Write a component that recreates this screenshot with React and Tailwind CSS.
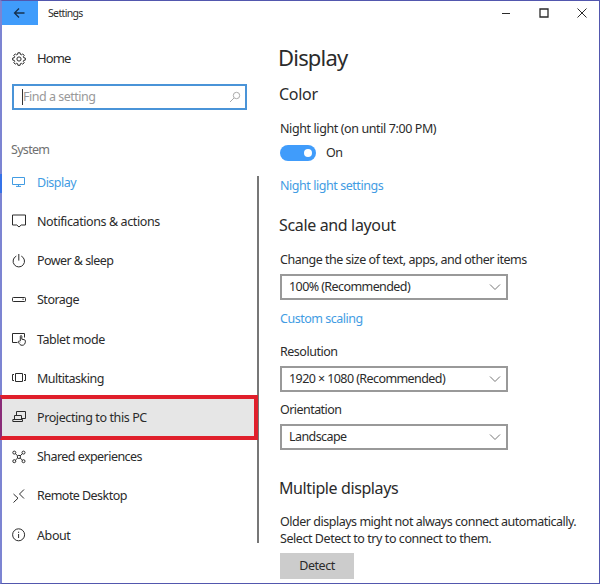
import { useState } from "react";

const Icon = ({ children, className = "w-[14px] h-[14px]", box = "0 0 14 14" }) => (
  <svg
    viewBox={box}
    className={className}
    fill="none"
    stroke="currentColor"
    strokeWidth="1"
  >
    {children}
  </svg>
);

const GearIcon = () => (
  <Icon>
    <path d="M5.9 .8h2.2l.3 1.6 1 .4 1.3-.9 1.5 1.5-.9 1.3.4 1 1.6.3v2.1l-1.6.3-.4 1 .9 1.3-1.5 1.5-1.3-.9-1 .4-.3 1.6H5.9l-.3-1.6-1-.4-1.3.9-1.5-1.5.9-1.3-.4-1L.7 8.1V6l1.6-.3.4-1-.9-1.3 1.5-1.5 1.3.9 1-.4z" />
    <circle cx="7" cy="7" r="2.1" />
  </Icon>
);

const DisplayIcon = () => (
  <Icon>
    <path d="M.5 2.5h12v7H.5zM4 11.4h5M6.5 9.5v2" />
  </Icon>
);

const MessageIcon = () => (
  <Icon>
    <path d="M.5 1h13v10H9.2L7 13l-2.2-2H.5z" />
  </Icon>
);

const PowerIcon = () => (
  <Icon>
    <path d="M4.3 2.1a5.7 5.7 0 1 0 5 0M6.8 0v6.6" />
  </Icon>
);

const StorageIcon = () => (
  <Icon>
    <rect x=".5" y="4.5" width="13" height="4" rx=".8" />
    <path d="M10.4 6.2h1.4" />
  </Icon>
);

const TabletIcon = () => (
  <Icon>
    <path d="M5.5 10.5h-5v-9h12v4" />
    <path d="M8.3 9V4.3c0-1 1.5-1 1.5 0v2.9l2.4.5c.9.2 1.2.6 1.2 1.4 0 2.6-1.1 4.2-3.3 4.2-1.8 0-2.6-1-3.6-3.2-.4-1 .5-1.7 1.8-.2" />
  </Icon>
);

const MultitaskIcon = () => (
  <Icon>
    <path d="M3.5 2.5h7v8h-7zM2 3.5H.5v6H2M12 3.5h1.5v6H12" />
  </Icon>
);

const ProjectIcon = () => (
  <Icon>
    <path d="M4.5 5.5v-4h9v7h-4M2.5 9.500v-4h7v4M.8 9.500h9.700v2H.8z" />
  </Icon>
);

const ShareIcon = () => (
  <Icon>
    <circle cx="2.3" cy="2.6" r="1.5" />
    <circle cx="11.5" cy="2.6" r="1.5" />
    <circle cx="2.3" cy="11.2" r="1.5" />
    <circle cx="11.5" cy="11.2" r="1.5" />
    <circle cx="6.9" cy="6.9" r="1.6" />
    <path d="M3.4 3.7l2.3 2.2M10.4 3.7L8.1 5.9M3.4 10.1l2.3-2.1M10.4 10.1L8.1 8" />
  </Icon>
);

const RemoteIcon = () => (
  <Icon>
    <path d="M1.5 5l4.5 4.2L1.5 13.5M12 .5L7.5 5 12 9.5" />
  </Icon>
);

const InfoIcon = () => (
  <Icon>
    <circle cx="6.6" cy="6.8" r="6" />
    <path d="M6.6 6v4M6.6 3.7v1.2" />
  </Icon>
);

const navItems = [
  { label: "Display", icon: DisplayIcon, tracking: "tracking-[-0.5px]" },
  { label: "Notifications & actions", icon: MessageIcon, tracking: "tracking-[-0.4px]" },
  { label: "Power & sleep", icon: PowerIcon, tracking: "tracking-[-0.55px]" },
  { label: "Storage", icon: StorageIcon, tracking: "tracking-[-0.5px]" },
  { label: "Tablet mode", icon: TabletIcon, tracking: "tracking-[-0.45px]" },
  { label: "Multitasking", icon: MultitaskIcon, tracking: "tracking-[-0.5px]" },
  { label: "Projecting to this PC", icon: ProjectIcon, tracking: "tracking-[-0.4px]" },
  { label: "Shared experiences", icon: ShareIcon, tracking: "tracking-[-0.55px]" },
  { label: "Remote Desktop", icon: RemoteIcon, tracking: "tracking-[-0.55px]" },
  { label: "About", icon: InfoIcon, tracking: "tracking-[-0.4px]" },
];

const Select = ({ value, className }) => (
  <button
    className={`flex w-[228px] h-[26px] items-center justify-between border-2 border-[#999999] pl-[7px] pr-[5px] text-left tracking-[-0.58px] whitespace-nowrap ${className}`}
  >
    <span>{value}</span>
    <Icon className="w-3 h-3 text-[#777777]" box="0 0 12 12">
      <path d="M1 3.5l5 5 5-5" />
    </Icon>
  </button>
);

const App = () => {
  const [active, setActive] = useState("Display");
  const [nightLight, setNightLight] = useState(true);

  return (
    <div className="flex w-[600px] h-[584px] flex-col border border-l-2 border-[#5257ae] border-l-[#7c84d2] bg-white font-['Noto_Sans',sans-serif] text-[12.5px] text-[#2b2b2b]">
      {/* Title bar */}
      <div className="flex h-6 shrink-0 items-center">
        <button className="flex w-9 h-6 items-center justify-center bg-[#409cfb] pr-[3px] text-[#16324f]">
          <Icon className="w-3 h-3" box="0 0 12 12">
            <path d="M11.5 6H1.5M6 1.5L1.5 6 6 10.5" strokeWidth="1.3" />
          </Icon>
        </button>
        <span className="-mt-px ml-[10px] text-[10.5px] leading-4 tracking-[-0.65px]">Settings</span>
        <div className="ml-auto mr-[12px] flex items-center gap-7">
          <Icon className="w-[10px] h-[10px]" box="0 0 10 10">
            <path d="M1 5.5h8" />
          </Icon>
          <Icon className="w-[10px] h-[10px]" box="0 0 10 10">
            <path d="M1 1h8v8H1z" strokeWidth="1.3" />
          </Icon>
          <Icon className="w-[10px] h-[10px]" box="0 0 10 10">
            <path d="M.5 .5l9 9M9.5 .5l-9 9" />
          </Icon>
        </div>
      </div>

      <div className="flex min-h-0 flex-1">
        {/* Sidebar */}
        <div className="w-[256px] shrink-0">
          <div className="mt-[24px] ml-[10px] flex h-5 items-center gap-[11px]">
            <GearIcon />
            <span className="text-[13px] tracking-[-0.9px]">Home</span>
          </div>
          <div className="mt-[15px] ml-[10px] flex w-[235px] h-[26px] items-center border-2 border-[#4a94d8] pl-2 pr-1">
            <span className="h-4 w-px bg-[#333333]" />
            <span className="text-[#999999] tracking-[-0.5px]">Find a setting</span>
            <Icon className="ml-auto w-3 h-3 text-[#aaaaaa]" box="0 0 12 12">
              <circle cx="7.5" cy="4.5" r="3.2" />
              <path d="M5 7L1 11" />
            </Icon>
          </div>
          <div className="mt-[30px] ml-[9px] h-5 leading-5 text-[#707070] tracking-[-0.7px]">
            System
          </div>
          <div className="mt-[3.6px] flex flex-col">
            {navItems.map(({ label, icon: ItemIcon, tracking }) => (
              <button
                key={label}
                onClick={() => setActive(label)}
                className={`relative flex h-[39.2px] items-center gap-[11px] pl-[10px] text-left whitespace-nowrap ${
                  label === active ? "text-[#429ce3]" : ""
                }`}
              >
                {label === active && (
                  <span className="absolute -left-[2px] h-[19px] w-[2px] bg-[#3572e8]" />
                )}
                {label === "Projecting to this PC" && (
                  <span className="absolute -left-[2px] -top-[4px] h-[45px] w-[258px] border-4 border-l-[2px] border-[#e01f2b] border-l-[#8a2c78] bg-[#e6e6e6]" />
                )}
                <span className="relative -top-px">
                  <ItemIcon />
                </span>
                <span className={`relative ${tracking}`}>{label}</span>
              </button>
            ))}
          </div>
        </div>
        {/* Scrollbar, broken by the highlighted row */}
        <div className="mt-[151px] -ml-[1px] h-[367px] w-[2px] shrink-0 bg-[#777777]" />

        {/* Display settings */}
        <div className="ml-[21px] flex flex-1 flex-col items-start whitespace-nowrap tracking-[-0.48px]">
          <h1 className="-ml-[2px] mt-[16px] text-[22px] leading-8 tracking-[-0.8px]">Display</h1>
          <h2 className="-ml-px mt-[9px] text-base leading-6 tracking-[-0.3px]">Color</h2>
          <p className="mt-[13px] leading-5 tracking-[-0.4px]">Night light (on until 7:00 PM)</p>
          <div className="mt-[6px] flex h-4 items-center gap-[10px]">
            <button
              onClick={() => setNightLight(!nightLight)}
              className={`flex h-4 w-9 items-center rounded-full px-1 ${
                nightLight ? "justify-end bg-[#409cfb]" : "justify-start bg-gray-400"
              }`}
            >
              <span className="h-2 w-2 rounded-full bg-white" />
            </button>
            <span>{nightLight ? "On" : "Off"}</span>
          </div>
          <a href="#" className="mt-[15px] leading-5 tracking-[-0.45px] text-[#429ce3]">
            Night light settings
          </a>
          <h2 className="-ml-px mt-[17px] text-base leading-6 tracking-[-0.35px]">Scale and layout</h2>
          <p className="mt-[13px] leading-5">Change the size of text, apps, and other items</p>
          <Select value="100% (Recommended)" className="mt-[4px]" />
          <a href="#" className="mt-[9px] leading-5 text-[#429ce3]">Custom scaling</a>
          <p className="mt-[13px] leading-5">Resolution</p>
          <Select value="1920 × 1080 (Recommended)" className="mt-[4px]" />
          <p className="mt-[8px] leading-5 tracking-[-0.55px]">Orientation</p>
          <Select value="Landscape" className="mt-[4px]" />
          <h2 className="-ml-px mt-[26px] text-base leading-6 tracking-[-0.4px]">Multiple displays</h2>
          <p className="mt-[13px] leading-[17px]">
            Older displays might not always connect automatically.
            <br />
            <span className="tracking-[-0.44px]">Select Detect to try to connect to them.</span>
          </p>
          <button className="mt-[6px] h-[26px] w-[74px] bg-[#cccccc]">Detect</button>
        </div>
      </div>
    </div>
  );
};

export default App;
